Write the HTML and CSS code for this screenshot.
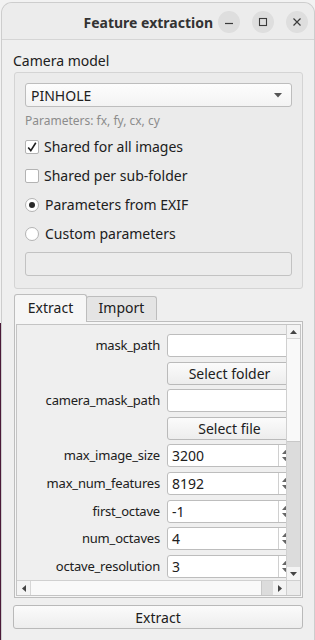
FILE: index.html
```html
<!DOCTYPE html>
<html>
<head>
  <meta charset="UTF-8">
  <link rel="stylesheet" href="styles.css">
</head>
<body>
  <div class="window">
    <div class="titlebar">
      <span class="title">Feature extraction</span>
      <div class="wm-buttons">
        <span class="wm-btn">
          <svg width="10" height="10" viewBox="0 0 10 10"><path d="M1 6.5h8" stroke="#3a3a3a" stroke-width="1.2"/></svg>
        </span>
        <span class="wm-btn">
          <svg width="10" height="10" viewBox="0 0 10 10"><rect x="1.5" y="1.5" width="7" height="7" fill="none" stroke="#3a3a3a" stroke-width="1.1"/></svg>
        </span>
        <span class="wm-btn">
          <svg width="10" height="10" viewBox="0 0 10 10"><path d="M1.5 1.5l7 7M8.5 1.5l-7 7" stroke="#3a3a3a" stroke-width="1.2"/></svg>
        </span>
      </div>
    </div>

    <div class="content">
      <div class="section-label">Camera model</div>

      <div class="group">
        <div class="combo">
          <span>PINHOLE</span>
          <svg width="8" height="5" viewBox="0 0 8 5"><path d="M0 0h8L4 4.5z" fill="#555"/></svg>
        </div>
        <div class="hint">Parameters: fx, fy, cx, cy</div>

        <div class="option">
          <span class="checkbox">
            <svg width="12" height="12" viewBox="0 0 12 12"><path d="M2.2 6.4l2.6 3.2L9.8 1.8" fill="none" stroke="#1e1e1e" stroke-width="1.6"/></svg>
          </span>
          <span>Shared for all images</span>
        </div>
        <div class="option">
          <span class="checkbox"></span>
          <span>Shared per sub-folder</span>
        </div>
        <div class="option">
          <span class="radio checked"></span>
          <span>Parameters from EXIF</span>
        </div>
        <div class="option">
          <span class="radio"></span>
          <span>Custom parameters</span>
        </div>

        <div class="input-disabled"></div>
      </div>

      <div class="tabbar">
        <div class="tab active">Extract</div>
        <div class="tab">Import</div>
      </div>

      <div class="tabpane">
        <div class="scrollarea">
          <div class="viewport">
            <div class="form">
              <div class="form-label">mask_path</div>
              <div class="line-edit"></div>

              <div></div>
              <div class="push-btn">Select folder</div>

              <div class="form-label">camera_mask_path</div>
              <div class="line-edit"></div>

              <div></div>
              <div class="push-btn">Select file</div>

              <div class="form-label">max_image_size</div>
              <div class="spin">
                <span class="spin-value">3200</span>
                <span class="spin-arrows"><svg width="7" height="13" viewBox="0 0 7 13"><path d="M0 5L3.5 1L7 5zM0 8h7L3.5 12z" fill="#666"/></svg></span>
              </div>

              <div class="form-label">max_num_features</div>
              <div class="spin">
                <span class="spin-value">8192</span>
                <span class="spin-arrows"><svg width="7" height="13" viewBox="0 0 7 13"><path d="M0 5L3.5 1L7 5zM0 8h7L3.5 12z" fill="#666"/></svg></span>
              </div>

              <div class="form-label">first_octave</div>
              <div class="spin">
                <span class="spin-value">-1</span>
                <span class="spin-arrows"><svg width="7" height="13" viewBox="0 0 7 13"><path d="M0 5L3.5 1L7 5zM0 8h7L3.5 12z" fill="#666"/></svg></span>
              </div>

              <div class="form-label">num_octaves</div>
              <div class="spin">
                <span class="spin-value">4</span>
                <span class="spin-arrows"><svg width="7" height="13" viewBox="0 0 7 13"><path d="M0 5L3.5 1L7 5zM0 8h7L3.5 12z" fill="#666"/></svg></span>
              </div>

              <div class="form-label">octave_resolution</div>
              <div class="spin">
                <span class="spin-value">3</span>
                <span class="spin-arrows"><svg width="7" height="13" viewBox="0 0 7 13"><path d="M0 5L3.5 1L7 5zM0 8h7L3.5 12z" fill="#666"/></svg></span>
              </div>
            </div>
          </div>

          <div class="vscroll">
            <div class="sb-arrow">
              <svg width="7" height="4" viewBox="0 0 7 4"><path d="M0 4L3.5 0L7 4z" fill="#444"/></svg>
            </div>
            <div class="vthumb"></div>
            <div class="vtrack"></div>
            <div class="sb-arrow">
              <svg width="7" height="4" viewBox="0 0 7 4"><path d="M0 0h7L3.5 4z" fill="#444"/></svg>
            </div>
          </div>

          <div class="hscroll">
            <div class="sb-arrow">
              <svg width="4" height="7" viewBox="0 0 4 7"><path d="M4 0v7L0 3.5z" fill="#444"/></svg>
            </div>
            <div class="hthumb"></div>
            <div class="htrack"></div>
            <div class="sb-arrow">
              <svg width="4" height="7" viewBox="0 0 4 7"><path d="M0 0v7L4 3.5z" fill="#444"/></svg>
            </div>
          </div>

          <div class="corner"></div>
        </div>
      </div>

      <div class="main-btn">Extract</div>
    </div>
  </div>
</body>
</html>
```

FILE: styles.css
```css
* {
  box-sizing: border-box;
}

body {
  width: 315px;
  height: 640px;
  margin: 0;
  overflow: hidden;
  font-family: 'Noto Sans', 'DejaVu Sans', sans-serif;
  font-size: 14px;
  color: #202020;
  background: linear-gradient(#f2f2f2 0, #f2f2f2 323px, #4b1a38 323px);
}

.window {
  margin: 3px 0 0 2px;
  width: 312px;
  height: 660px;
  background: #efefef;
  border-radius: 10px 10px 0 0;
  box-shadow: 0 0 0 1px #cdcdcd;
}

/* Header bar */
.titlebar {
  height: 37px;
  display: flex;
  align-items: center;
  justify-content: flex-end;
  gap: 5px;
  padding: 2px 6px 0 0;
  background: #ececec;
  border-bottom: 1px solid #d5d5d5;
  border-radius: 10px 10px 0 0;
}

.title {
  font-weight: 700;
  font-size: 14px;
  color: #333;
}

.wm-buttons {
  display: flex;
  gap: 12px;
}

.wm-btn {
  width: 22px;
  height: 22px;
  border-radius: 50%;
  background: #dedede;
  display: flex;
  align-items: center;
  justify-content: center;
}

.content {
  padding: 11px 11px 0 11px;
}

.section-label {
  line-height: 19px;
}

/* Camera group */
.group {
  margin: 2px 0 0 1px;
  padding: 10px 10px 12px 10px;
  background: #ebebeb;
  border: 1px solid #d4d4d4;
  border-radius: 3px;
}

.combo {
  height: 24px;
  display: flex;
  align-items: center;
  justify-content: space-between;
  padding: 0 9px 0 5px;
  background: linear-gradient(#fdfdfd, #f3f3f3);
  border: 1px solid #bdbdbd;
  border-radius: 3px;
}

.hint {
  margin-top: 6px;
  font-size: 12px;
  line-height: 16px;
  color: #8c8c8c;
}

.option {
  height: 29px;
  display: flex;
  align-items: center;
  gap: 5px;
}

.hint + .option {
  margin-top: 3px;
}

.checkbox {
  width: 14px;
  height: 14px;
  display: flex;
  align-items: center;
  justify-content: center;
  background: #fff;
  border: 1px solid #b3b3b3;
  border-radius: 2px;
}

.radio {
  width: 14px;
  height: 14px;
  margin-right: 1px;
  background: #fff;
  border: 1px solid #b3b3b3;
  border-radius: 50%;
  display: flex;
  align-items: center;
  justify-content: center;
}

.radio.checked::after {
  content: '';
  width: 6px;
  height: 6px;
  border-radius: 50%;
  background: #2a2a2a;
}

.input-disabled {
  margin-top: 4px;
  height: 24px;
  background: #ececec;
  border: 1px solid #c2c2c2;
  border-radius: 3px;
}

/* Tabs */
.tabbar {
  margin: 5px 0 0 1px;
  height: 27px;
  display: flex;
  align-items: flex-end;
  position: relative;
  z-index: 1;
}

.tab {
  height: 24px;
  width: 71px;
  padding-top: 1px;
  text-align: center;
  background: #e4e4e4;
  border: 1px solid #bdbdbd;
  border-bottom: none;
  border-radius: 3px 3px 0 0;
  margin-bottom: 1px;
}

.tab.active {
  height: 28px;
  width: 73px;
  padding-top: 3px;
  background: #f6f6f6;
  margin-bottom: -1px;
  margin-right: -1px;
}

.tabpane {
  margin-left: 1px;
  height: 277px;
  padding: 2px 1px 1px 1px;
  background: #f6f6f6;
  border: 1px solid #bdbdbd;
}

.scrollarea {
  height: 100%;
  display: grid;
  grid-template-columns: 1fr 14px;
  grid-template-rows: 1fr 15px;
  background: #efefef;
  border: 1px solid #c4c4c4;
}

.viewport {
  overflow: hidden;
  padding-top: 9px;
}

.form {
  display: grid;
  grid-template-columns: 143px 125px;
  grid-auto-rows: 23px;
  column-gap: 7px;
  row-gap: 4.6px;
}

.form-label {
  font-size: 13px;
  letter-spacing: -0.2px;
  text-align: right;
  line-height: 23px;
}

.line-edit {
  background: #fff;
  border: 1px solid #bdbdbd;
  border-radius: 3px;
}

.push-btn {
  display: flex;
  align-items: center;
  justify-content: center;
  background: linear-gradient(#fbfbfb, #ededed);
  border: 1px solid #bababa;
  border-radius: 3px;
}

.spin {
  display: flex;
  background: #fff;
  border: 1px solid #bdbdbd;
  border-radius: 3px;
}

.spin-value {
  flex: 1;
  padding-left: 4px;
  line-height: 21px;
}

.spin-arrows {
  width: 13px;
  display: flex;
  align-items: center;
  justify-content: center;
  border-left: 1px solid #d0d0d0;
}

/* Scrollbars */
.vscroll {
  display: flex;
  flex-direction: column;
  border-left: 1px solid #d0d0d0;
  background: #f4f4f4;
}

.hscroll {
  display: flex;
  border-top: 1px solid #d0d0d0;
  background: #f4f4f4;
}

.sb-arrow {
  flex: 0 0 13px;
  display: flex;
  align-items: center;
  justify-content: center;
}

.vthumb {
  flex: 0 0 104px;
  background: #f9f9f9;
  border-top: 1px solid #d6d6d6;
  border-bottom: 1px solid #c8c8c8;
}

.vtrack {
  flex: 1;
  background: #dcdcdc;
}

.hthumb {
  flex: 0 0 232px;
  background: #f9f9f9;
  border-left: 1px solid #d6d6d6;
  border-right: 1px solid #c8c8c8;
}

.htrack {
  flex: 1;
  background: #dcdcdc;
}

.corner {
  background: #ececec;
  border-top: 1px solid #d0d0d0;
  border-left: 1px solid #d0d0d0;
}

.main-btn {
  margin-top: 7px;
  height: 24px;
  display: flex;
  align-items: center;
  justify-content: center;
  background: linear-gradient(#fbfbfb, #ededed);
  border: 1px solid #b9b9b9;
  border-radius: 3px;
}
```
